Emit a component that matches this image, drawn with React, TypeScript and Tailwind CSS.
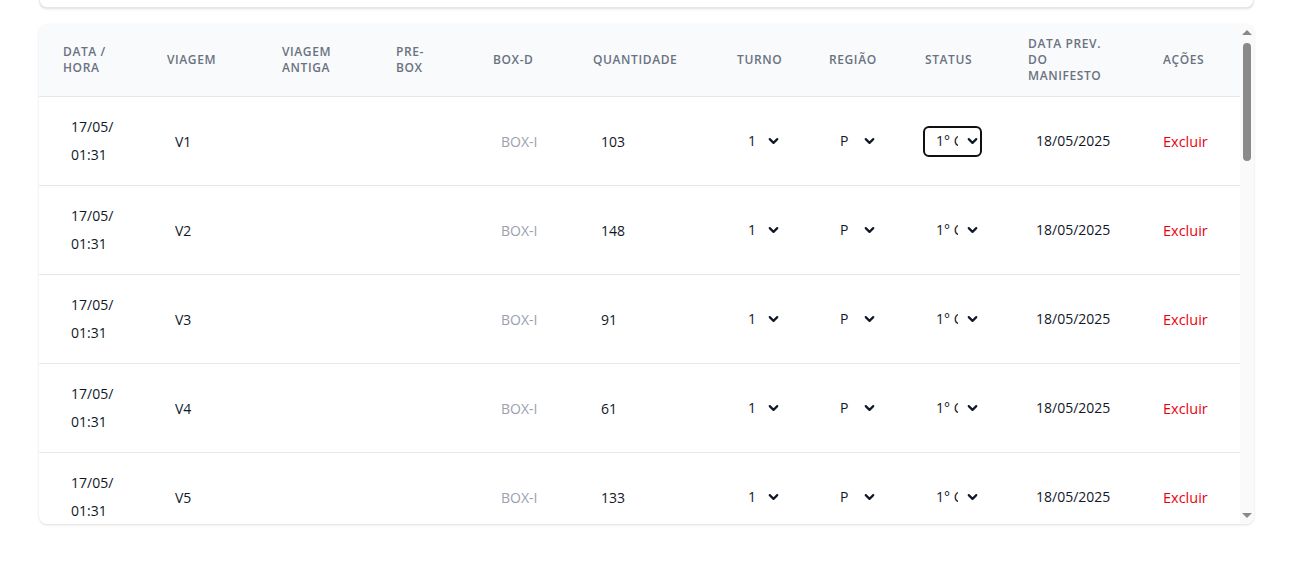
import React from "react";
import { ChevronDown } from "lucide-react";

const rows = [
  { viagem: "V1", qtd: "103" },
  { viagem: "V2", qtd: "148" },
  { viagem: "V3", qtd: "91" },
  { viagem: "V4", qtd: "61" },
  { viagem: "V5", qtd: "133" },
  { viagem: "V6", qtd: "77" },
  { viagem: "V7", qtd: "120" },
  { viagem: "V8", qtd: "54" },
  { viagem: "V9", qtd: "98" },
  { viagem: "V10", qtd: "142" },
  { viagem: "V11", qtd: "66" },
  { viagem: "V12", qtd: "110" },
  { viagem: "V13", qtd: "87" },
  { viagem: "V14", qtd: "129" },
  { viagem: "V15", qtd: "73" },
  { viagem: "V16", qtd: "101" },
  { viagem: "V17", qtd: "58" },
  { viagem: "V18", qtd: "139" },
  { viagem: "V19", qtd: "95" },
  { viagem: "V20", qtd: "84" },
];

const headers = [
  { label: "Data / Hora", w: "w-[104px]" },
  { label: "Viagem", w: "w-[115px]" },
  { label: "Viagem Antiga", w: "w-[114px]" },
  { label: "Pre-Box", w: "w-[97px]" },
  { label: "Box-D", w: "w-[100px]" },
  { label: "Quantidade", w: "w-[144px]" },
  { label: "Turno", w: "w-[92px]" },
  { label: "Região", w: "w-[96px]" },
  { label: "Status", w: "w-[103px]" },
  { label: "Data Prev. do Manifesto", w: "w-[135px]" },
  { label: "Ações", w: "w-[101px]" },
];

const inputCls =
  "w-full px-2 text-sm text-gray-900 bg-transparent border-0 outline-none placeholder:text-gray-400";

function Select({
  options,
  value,
  focused,
}: {
  options: { value: string; label: string }[];
  value: string;
  focused?: boolean;
}) {
  return (
    <div
      className={
        focused
          ? "relative rounded outline-2 outline-solid outline-[#101010]"
          : "relative"
      }
    >
      <select
        className="w-full h-[27px] appearance-none pl-[11px] pr-[22px] text-sm text-gray-900 bg-transparent border-0 outline-none cursor-pointer"
        defaultValue={value}
      >
        {options.map((o) => (
          <option key={o.value} value={o.value}>
            {o.label}
          </option>
        ))}
      </select>
      <ChevronDown
        size={15}
        strokeWidth={3.5}
        className="pointer-events-none absolute right-0 top-1/2 -translate-y-1/2 text-gray-900"
      />
    </div>
  );
}

export default function App() {
  return (
    <div
      className="min-h-screen bg-white"
      style={{ fontFamily: '"Open Sans", "Noto Sans", sans-serif' }}
    >
      <div className="ml-[39px] w-[1215px]">
        <div className="h-[8px] rounded-b-lg border-x border-b border-gray-200 bg-white shadow-sm" />

        <div className="mt-4 flex h-[500px] rounded-lg bg-white shadow overflow-hidden">
          <div className="flex-1 overflow-hidden">
            <table className="table-fixed border-collapse w-[1201px]">
              <thead className="bg-gray-50">
                <tr className="border-b border-gray-200">
                  {headers.map((h) => (
                    <th
                      key={h.label}
                      className={`${h.w} px-6 py-3 text-left text-xs leading-4 font-semibold text-gray-500 uppercase tracking-wider align-middle`}
                    >
                      {h.label}
                    </th>
                  ))}
                </tr>
              </thead>
              <tbody>
                {rows.map((r, i) => (
                  <tr key={r.viagem} className="border-b border-gray-200">
                    <td className="px-6 py-4 align-middle">
                      <div className="px-2 text-sm leading-7 text-gray-900">
                        17/05/
                        <br />
                        01:31
                      </div>
                    </td>
                    <td className="px-6 py-4 align-middle">
                      <input className={inputCls} defaultValue={r.viagem} />
                    </td>
                    <td className="px-6 py-4 align-middle">
                      <input className={inputCls} defaultValue="" />
                    </td>
                    <td className="px-6 py-4 align-middle">
                      <input className={inputCls} defaultValue="" />
                    </td>
                    <td className="px-6 py-4 align-middle">
                      <input className={inputCls} placeholder="BOX-ID" />
                    </td>
                    <td className="px-6 py-4 align-middle">
                      <input className={inputCls} defaultValue={r.qtd} />
                    </td>
                    <td className="px-6 py-4 align-middle">
                      <Select
                        value="1"
                        options={[
                          { value: "1", label: "1" },
                          { value: "2", label: "2" },
                          { value: "3", label: "3" },
                        ]}
                      />
                    </td>
                    <td className="px-6 py-4 align-middle">
                      <Select
                        value="P"
                        options={[
                          { value: "P", label: "P" },
                          { value: "S", label: "S" },
                        ]}
                      />
                    </td>
                    <td className="px-6 py-4 align-middle">
                      <Select
                        value="1c"
                        focused={i === 0}
                        options={[
                          { value: "1c", label: "1° Ciclo" },
                          { value: "2c", label: "2° Ciclo" },
                        ]}
                      />
                    </td>
                    <td className="px-6 py-4 align-middle">
                      <div className="px-2 text-sm text-gray-900 whitespace-nowrap">
                        18/05/2025
                      </div>
                    </td>
                    <td className="px-6 py-4 align-middle">
                      <button className="text-[14.5px] text-red-600 hover:text-red-800">
                        Excluir
                      </button>
                    </td>
                  </tr>
                ))}
              </tbody>
            </table>
          </div>

          {/* scrollbar */}
          <div className="flex w-[14px] flex-col items-center bg-[#fafafa] pt-[6px] pb-[6px]">
            <div className="h-0 w-0 border-x-[5px] border-b-[5px] border-x-transparent border-b-[#8a8a8a]" />
            <div className="mt-[8px] h-[118px] w-[8px] rounded-full bg-[#8a8a8a]" />
            <div className="flex-1" />
            <div className="h-0 w-0 border-x-[5px] border-t-[5px] border-x-transparent border-t-[#8a8a8a]" />
          </div>
        </div>
      </div>
    </div>
  );
}
